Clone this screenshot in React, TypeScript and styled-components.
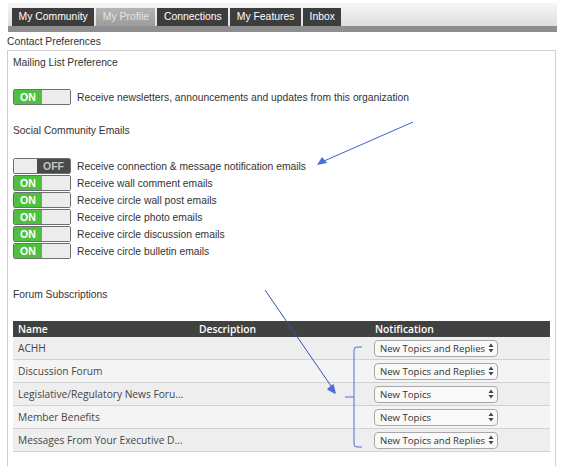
import * as React from 'react';
import styled, { createGlobalStyle } from 'styled-components';

const GlobalStyle = createGlobalStyle`
    body {
        margin: 0;
        background: #fff;
        font-family: "Liberation Sans", Arial, sans-serif;
        font-size: 10.3px;
        color: #333;
    }
`;

const Page = styled.div`
    position: relative;
    width: 562px;
    padding: 3px 6px 0 7px;
    box-sizing: border-box;
`;

const TabBar = styled.div`
    display: flex;
    align-items: flex-end;
    height: 23px;
    margin-left: 1px;
    margin-right: -1px;
    padding-left: 4px;
    background: linear-gradient(#f6f6f6, #dedede);
    border-bottom: 6px solid #8e8e8e;
`;

const Tab = styled.div<{ $active?: boolean }>`
    height: 18px;
    line-height: 18px;
    padding: 0 6.5px;
    margin-right: 2px;
    font-size: 10.4px;
    color: ${p => (p.$active ? '#e4e4e4' : '#fff')};
    background: ${p => (p.$active ? 'linear-gradient(#b4b4b4, #9c9c9c)' : '#3d3d3d')};
`;

const Title = styled.div`
    margin-top: 4px;
    line-height: 12px;
    color: #333;
`;

const Panel = styled.div`
    margin-top: 2px;
    border: 1px solid #cfcfcf;
    padding: 5px 5px 14px 5px;
`;

const Heading = styled.div<{ $gap: number }>`
    line-height: 13px;
    margin-bottom: ${p => p.$gap}px;
`;

const ToggleList = styled.div<{ $after: number }>`
    display: flex;
    flex-direction: column;
    gap: 1px;
    margin-bottom: ${p => p.$after}px;
`;

const ToggleRow = styled.div`
    display: flex;
    align-items: center;
    gap: 6px;
    height: 16px;
`;

const Switch = styled.div`
    display: flex;
    width: 58px;
    height: 16px;
    box-sizing: border-box;
    border: 1px solid #6f6f6f;
    border-radius: 2px;
    overflow: hidden;
`;

const Half = styled.div<{ $kind: 'on' | 'off' | 'blank' }>`
    flex: 1;
    font-size: 10.5px;
    font-weight: bold;
    line-height: 14px;
    padding: 0 6px;
    text-align: ${p => (p.$kind === 'off' ? 'right' : 'left')};
    color: ${p => (p.$kind === 'off' ? '#c4c4c4' : '#fff')};
    background: ${p => (p.$kind === 'on' ? '#4fbf3f' : p.$kind === 'off' ? '#4a4a4a' : '#ececec')};
`;

const ToggleLabel = styled.span`
    color: #333;
`;

const Table = styled.div`
    font-family: "Open Sans", "Liberation Sans", sans-serif;
`;

const HeaderRow = styled.div`
    display: grid;
    grid-template-columns: 181px 176px 1fr;
    height: 16px;
    line-height: 16px;
    background: #414141;
    color: #fff;
    font-size: 10.3px;
    font-weight: 600;
`;

const HeadCell = styled.div`
    padding-left: 5px;
`;

const BodyRow = styled.div<{ $alt: boolean }>`
    display: grid;
    grid-template-columns: 181px 176px 1fr;
    align-items: center;
    height: 23px;
    box-sizing: border-box;
    border-bottom: 1px solid #d2d2d2;
    background: ${p => (p.$alt ? '#f4f4f4' : '#eeeeee')};
    color: #454545;
    font-size: 10.2px;
`;

const Cell = styled.div`
    padding-left: 5px;
    white-space: nowrap;
`;

const Select = styled.div`
    display: flex;
    align-items: center;
    justify-content: space-between;
    width: 124px;
    height: 17px;
    box-sizing: border-box;
    margin-left: 4px;
    padding: 0 3px 0 5px;
    border: 1px solid #a8a8a8;
    border-radius: 4px;
    background: #f9f9f9;
    color: #333;
    font-size: 9.6px;
    white-space: nowrap;

    svg {
        flex-shrink: 0;
    }
`;

const Overlay = styled.svg`
    position: absolute;
    left: 0;
    top: 0;
    pointer-events: none;
`;

const Arrows = () => (
    <svg width="6" height="10" viewBox="0 0 6 10">
        <path d="M3 0.5 L5.5 4 L0.5 4 Z M3 9.5 L5.5 6 L0.5 6 Z" fill="#444" />
    </svg>
);

const Toggle = ({ on, label }: { on: boolean; label: string }) => (
    <ToggleRow>
        <Switch>
            {on ? <Half $kind="on">ON</Half> : <Half $kind="blank" />}
            {on ? <Half $kind="blank" /> : <Half $kind="off">OFF</Half>}
        </Switch>
        <ToggleLabel>{label}</ToggleLabel>
    </ToggleRow>
);

const social: [boolean, string][] = [
    [false, 'Receive connection & message notification emails'],
    [true, 'Receive wall comment emails'],
    [true, 'Receive circle wall post emails'],
    [true, 'Receive circle photo emails'],
    [true, 'Receive circle discussion emails'],
    [true, 'Receive circle bulletin emails'],
];

const forums: [string, string][] = [
    ['ACHH', 'New Topics and Replies'],
    ['Discussion Forum', 'New Topics and Replies'],
    ['Legislative/Regulatory News Foru...', 'New Topics'],
    ['Member Benefits', 'New Topics'],
    ['Messages From Your Executive D...', 'New Topics and Replies'],
];

export default function App() {
    return (
        <Page>
            <GlobalStyle />
            <TabBar>
                <Tab>My Community</Tab>
                <Tab $active>My Profile</Tab>
                <Tab>Connections</Tab>
                <Tab>My Features</Tab>
                <Tab>Inbox</Tab>
            </TabBar>
            <Title>Contact Preferences</Title>
            <Panel>
                <Heading $gap={20}>Mailing List Preference</Heading>
                <ToggleList $after={19}>
                    <Toggle on label="Receive newsletters, announcements and updates from this organization" />
                </ToggleList>
                <Heading $gap={21}>Social Community Emails</Heading>
                <ToggleList $after={29}>
                    {social.map(([on, label]) => (
                        <Toggle key={label} on={on} label={label} />
                    ))}
                </ToggleList>
                <Heading $gap={20}>Forum Subscriptions</Heading>
                <Table>
                    <HeaderRow>
                        <HeadCell>Name</HeadCell>
                        <HeadCell>Description</HeadCell>
                        <HeadCell>Notification</HeadCell>
                    </HeaderRow>
                    {forums.map(([name, value], i) => (
                        <BodyRow key={name} $alt={i % 2 === 1}>
                            <Cell>{name}</Cell>
                            <Cell />
                            <Select>
                                <span>{value}</span>
                                <Arrows />
                            </Select>
                        </BodyRow>
                    ))}
                </Table>
            </Panel>
            <Overlay width="562" height="466" viewBox="0 0 562 466">
                <line x1="413" y1="122" x2="324" y2="161" stroke="#3f5fcf" strokeWidth="1" />
                <path d="M317 165 L322 157 L327 163 Z" fill="#4a6fd8" />
                <line x1="265" y1="290" x2="331" y2="386" stroke="#3552b8" strokeWidth="1" />
                <path d="M335 393 L328 389 L333 385 Z" fill="#4a6fd8" stroke="#4a6fd8" strokeWidth="1.5" strokeLinejoin="round" />
                <path
                    d="M362 347 L357 347 Q354 347 354 350 L354 444 Q354 447 357 447 L362 447 M345 397 L354 397"
                    fill="none"
                    stroke="#4a6fd8"
                    strokeWidth="1"
                />
            </Overlay>
        </Page>
    );
}
